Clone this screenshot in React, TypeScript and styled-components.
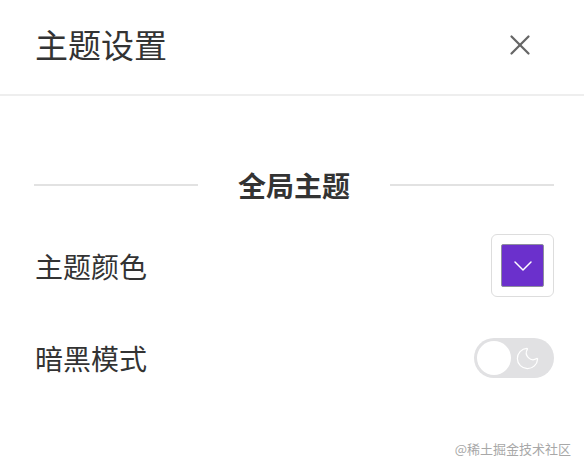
import React, { useState } from 'react';
import styled, { createGlobalStyle } from 'styled-components';
import { X, ChevronDown, Moon } from 'lucide-react';

const GlobalStyle = createGlobalStyle`
  body {
    margin: 0;
    background: #fff;
    font-family: "Noto Sans CJK SC", "Noto Sans", sans-serif;
    color: #333;
  }
`;

const Panel = styled.div`
  width: 584px;
  height: 470px;
  position: relative;
  overflow: hidden;
`;

const Header = styled.div`
  display: flex;
  align-items: center;
  justify-content: space-between;
  padding: 0 47px 0 35px;
  border-bottom: 2px solid #eeeeee;
  box-sizing: border-box;
  height: 96px;
`;

const Title = styled.h1`
  margin: 0;
  font-size: 33px;
  font-weight: 400;
  color: #333;
  line-height: 1;
  margin-top: -6px;
`;

const CloseButton = styled.button`
  display: flex;
  padding: 0;
  border: none;
  background: none;
  color: #666;
  cursor: pointer;
  margin-top: -4px;
`;

const Body = styled.div`
  padding: 69px 30px 0 34px;
`;

const Divider = styled.div`
  display: flex;
  align-items: center;
  gap: 40px;
  height: 40px;
  &::before,
  &::after {
    content: '';
    flex: 1;
    height: 2px;
    background: #e2e2e2;
  }
`;

const DividerText = styled.span`
  font-size: 28px;
  font-weight: 700;
  color: #333;
`;

const Row = styled.div<{ $top: number }>`
  display: flex;
  align-items: center;
  justify-content: space-between;
  margin-top: ${(p) => p.$top}px;
`;

const Label = styled.span`
  font-size: 28px;
  color: #333;
  margin-left: 1px;
`;

const ColorPicker = styled.div`
  width: 63px;
  height: 63px;
  box-sizing: border-box;
  border: 1px solid #dddddd;
  border-radius: 6px;
  display: flex;
  align-items: center;
  justify-content: center;
`;

const Swatch = styled.div<{ $color: string }>`
  width: 43px;
  height: 43px;
  box-sizing: border-box;
  border: 1px solid #8e8e9e;
  border-radius: 2px;
  background: ${(p) => p.$color};
  display: flex;
  align-items: center;
  justify-content: center;
  color: #fff;
`;

const Switch = styled.button<{ $on: boolean }>`
  width: 80px;
  height: 40px;
  border: none;
  border-radius: 20px;
  padding: 3px;
  background: ${(p) => (p.$on ? '#6b30cc' : '#e1e1e3')};
  display: flex;
  align-items: center;
  justify-content: space-between;
  cursor: pointer;
  box-sizing: border-box;
  color: #fff;
`;

const Knob = styled.span`
  width: 34px;
  height: 34px;
  border-radius: 50%;
  background: #fff;
`;

const MoonWrap = styled.span`
  display: flex;
  margin-right: 10px;
`;

const Watermark = styled.div`
  position: absolute;
  right: 13px;
  bottom: 12px;
  font-size: 13px;
  color: #a8a8a8;
`;

export default function App() {
  const [dark, setDark] = useState(false);

  return (
    <Panel>
      <GlobalStyle />
      <Header>
        <Title>主题设置</Title>
        <CloseButton aria-label="close">
          <X size={34} strokeWidth={1.6} />
        </CloseButton>
      </Header>
      <Body>
        <Divider>
          <DividerText>全局主题</DividerText>
        </Divider>
        <Row $top={29}>
          <Label>主题颜色</Label>
          <ColorPicker>
            <Swatch $color="#6b30cc">
              <ChevronDown size={32} strokeWidth={1.1} />
            </Swatch>
          </ColorPicker>
        </Row>
        <Row $top={41}>
          <Label>暗黑模式</Label>
          <Switch $on={dark} onClick={() => setDark(!dark)}>
            <Knob />
            <MoonWrap>
              <Moon size={27} strokeWidth={1.1} />
            </MoonWrap>
          </Switch>
        </Row>
      </Body>
      <Watermark>@稀土掘金技术社区</Watermark>
    </Panel>
  );
}
